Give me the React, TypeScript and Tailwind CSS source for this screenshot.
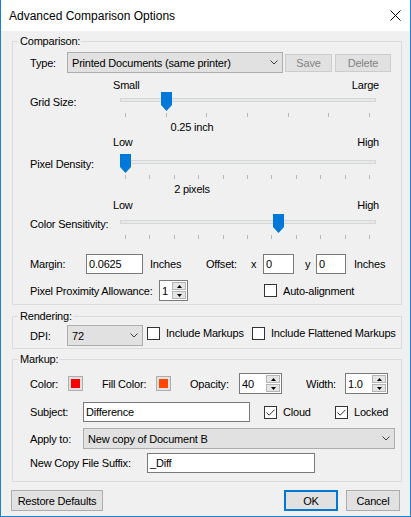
import React from 'react';

const Chevron = () => (
    <svg width="8" height="5" viewBox="0 0 8 5">
        <path d="M0.5 0.5L4 4L7.5 0.5" fill="none" stroke="#3c3c3c" strokeWidth="1" />
    </svg>
);

function Select({ text, className }: { text: string; className: string }) {
    return (
        <div className={`flex items-center justify-between bg-[#e1e1e1] border border-[#adadad] pl-[4px] pr-[4px] ${className}`}>
            <span>{text}</span>
            <Chevron />
        </div>
    );
}

function Checkbox({ checked }: { checked?: boolean }) {
    return (
        <div className="w-[13px] h-[13px] shrink-0 bg-white border border-[#333333] flex items-center justify-center">
            {checked && (
                <svg width="9" height="7" viewBox="0 0 9 7">
                    <path d="M0.5 3.5L3.2 6.2L8.5 0.7" fill="none" stroke="#333333" strokeWidth="1" />
                </svg>
            )}
        </div>
    );
}

function Spinner({ value, className }: { value: string; className: string }) {
    return (
        <div className={`flex bg-white border border-[#7a7a7a] h-[21px] ${className}`}>
            <span className="flex-1 pl-[2px] self-center">{value}</span>
            <div className="w-[15px] flex flex-col gap-[1px] py-[1px] pr-[1px]">
                <div className="flex-1 bg-[#e5e5e5] border border-[#b4b4b4] flex items-center justify-center">
                    <svg width="5" height="3" viewBox="0 0 5 3"><path d="M2.5 0L5 3H0Z" fill="#000" /></svg>
                </div>
                <div className="flex-1 bg-[#e5e5e5] border border-[#b4b4b4] flex items-center justify-center">
                    <svg width="5" height="3" viewBox="0 0 5 3"><path d="M0 0H5L2.5 3Z" fill="#000" /></svg>
                </div>
            </div>
        </div>
    );
}

function Swatch({ color }: { color: string }) {
    return (
        <div className="w-[15px] h-[15px] bg-[#e1e1e1] border border-[#adadad] p-[2px]">
            <div className={`w-full h-full ${color}`} />
        </div>
    );
}

const Thumb = ({ className }: { className: string }) => (
    <svg width="11" height="19" viewBox="0 0 11 19" className={className}>
        <path d="M0 0H11V13L5.5 19L0 13Z" fill="#0078d7" />
    </svg>
);

interface SliderProps {
    label: string;
    lo: string;
    hi: string;
    ticks: number;
    thumbLeft: string;
    topClass: string;
    rowClass: string;
    value?: string;
}

function Slider({ label, lo, hi, ticks, thumbLeft, topClass, rowClass, value }: SliderProps) {
    return (
        <div className={`pl-[17px] ${topClass}`}>
            <div className="ml-[83px] w-[266px] flex justify-between">
                <span>{lo}</span>
                <span>{hi}</span>
            </div>
            <div className={`flex items-center ${rowClass}`}>
                <span className="w-[90px]">{label}</span>
                <div className="relative w-[256px] h-[19px]">
                    <div className="mt-[6px] h-[4px] bg-[#e7eaea] border border-[#d6d6d6]" />
                    <Thumb className={`absolute top-0 ${thumbLeft}`} />
                </div>
            </div>
            <div className="ml-[95px] mt-[2px] w-[245px] flex justify-between">
                {Array.from({ length: ticks }).map((_, i) => (
                    <div key={i} className="w-[1px] h-[4px] bg-[#b8b8b8]" />
                ))}
            </div>
            {value && <div className="ml-[122px] mt-[3px] w-[80px] text-center">{value}</div>}
        </div>
    );
}

export default function App() {
    return (
        <div className="w-[411px] h-[517px] flex flex-col border-x border-b border-[#1883d7] bg-[#f0f0f0] text-black text-[11px] leading-[14px] tracking-[-0.2px] font-['Liberation_Sans',Arial,sans-serif]">
            {/* title bar */}
            <div className="h-[31px] shrink-0 bg-white flex items-center justify-between pl-[8px] pr-[9px]">
                <span className="text-[12px] tracking-normal">Advanced Comparison Options</span>
                <svg width="11" height="11" viewBox="0 0 11 11">
                    <path d="M0.5 0.5L10.5 10.5M10.5 0.5L0.5 10.5" stroke="#000" strokeWidth="1" />
                </svg>
            </div>

            {/* Comparison */}
            <fieldset className="mt-[3px] ml-[11px] w-[390px] border border-[#dcdcdc] pb-[3px]">
                <legend className="ml-[5px] pl-[2px] pr-[1px]">Comparison:</legend>
                <div className="mt-[4px] pl-[17px] flex items-center">
                    <span className="w-[37px]">Type:</span>
                    <Select text="Printed Documents (same printer)" className="w-[216px] h-[21px]" />
                    <button className="ml-[2px] w-[47px] h-[18px] bg-[#e1e1e1] border border-[#cccccc] text-[#838383]">Save</button>
                    <button className="ml-[3px] w-[56px] h-[18px] bg-[#e1e1e1] border border-[#cccccc] text-[#838383]">Delete</button>
                </div>

                <Slider label="Grid Size:" lo="Small" hi="Large" ticks={7} thumbLeft="left-[41px]" topClass="mt-[5px]" rowClass="mt-0" value="0.25 inch" />
                <Slider label="Pixel Density:" lo="Low" hi="High" ticks={11} thumbLeft="left-0" topClass="mt-[1px]" rowClass="mt-[5px]" value="2 pixels" />
                <Slider label="Color Sensitivity:" lo="Low" hi="High" ticks={11} thumbLeft="left-[153px]" topClass="mt-[2px]" rowClass="mt-[2px]" />

                <div className="mt-[15px] pl-[17px] flex items-center">
                    <span className="w-[56px]">Margin:</span>
                    <div className="w-[57px] h-[20px] bg-white border border-[#7a7a7a] pl-[2px] flex items-center">0.0625</div>
                    <span className="ml-[7px] w-[56px]">Inches</span>
                    <span className="w-[45px]">Offset:</span>
                    <span className="w-[12px]">x</span>
                    <div className="w-[31px] h-[20px] bg-white border border-[#7a7a7a] pl-[2px] flex items-center">0</div>
                    <span className="ml-[11px] w-[11px]">y</span>
                    <div className="w-[30px] h-[20px] bg-white border border-[#7a7a7a] pl-[2px] flex items-center">0</div>
                    <span className="ml-[8px]">Inches</span>
                </div>

                <div className="mt-[6px] pl-[17px] flex items-center">
                    <span className="w-[129px]">Pixel Proximity Allowance:</span>
                    <Spinner value="1" className="w-[29px] h-[20px]" />
                    <div className="ml-[76px]"><Checkbox /></div>
                    <span className="ml-[6px]">Auto-alignment</span>
                </div>
            </fieldset>

            {/* Rendering */}
            <fieldset className="mt-[4px] ml-[11px] w-[390px] border border-[#dcdcdc] pb-[2px]">
                <legend className="ml-[5px] pl-[2px] pr-[1px]">Rendering:</legend>
                <div className="mt-[2px] pl-[17px] flex items-start">
                    <span className="mt-[4px] w-[37px]">DPI:</span>
                    <Select text="72" className="w-[76px] h-[21px]" />
                    <div className="ml-[4px] mt-[1px] flex items-center">
                        <Checkbox />
                        <span className="ml-[6px] w-[86px]">Include Markups</span>
                        <Checkbox />
                        <span className="ml-[6px]">Include Flattened Markups</span>
                    </div>
                </div>
            </fieldset>

            {/* Markup */}
            <fieldset className="mt-[3px] ml-[11px] w-[390px] border border-[#dcdcdc] pb-[8px]">
                <legend className="ml-[5px] pl-[2px] pr-[1px]">Markup:</legend>
                <div className="mt-[7px] pl-[17px] flex items-center h-[21px]">
                    <span className="w-[38px]">Color:</span>
                    <Swatch color="bg-[#ff0000]" />
                    <span className="ml-[19px] w-[54px]">Fill Color:</span>
                    <Swatch color="bg-[#ff4500]" />
                    <span className="ml-[19px] w-[49px]">Opacity:</span>
                    <Spinner value="40" className="w-[43px]" />
                    <span className="ml-[24px] w-[39px]">Width:</span>
                    <Spinner value="1.0" className="w-[43px]" />
                </div>

                <div className="mt-[8px] pl-[17px] flex items-center">
                    <span className="w-[53px]">Subject:</span>
                    <div className="w-[167px] h-[20px] bg-white border border-[#7a7a7a] pl-[2px] flex items-center">Difference</div>
                    <div className="ml-[14px]"><Checkbox checked /></div>
                    <span className="ml-[6px] w-[52px]">Cloud</span>
                    <Checkbox checked />
                    <span className="ml-[6px]">Locked</span>
                </div>

                <div className="mt-[6px] pl-[17px] flex items-center">
                    <span className="w-[53px]">Apply to:</span>
                    <Select text="New copy of Document B" className="w-[312px] h-[21px]" />
                </div>

                <div className="mt-[4px] pl-[17px] flex items-center">
                    <span className="w-[117px]">New Copy File Suffix:</span>
                    <div className="w-[168px] h-[20px] bg-white border border-[#7a7a7a] pl-[2px] flex items-center">_Diff</div>
                </div>
            </fieldset>

            {/* buttons */}
            <div className="mt-[8px] px-[10px] flex items-center">
                <button className="w-[92px] h-[21px] bg-[#e1e1e1] border border-[#adadad]">Restore Defaults</button>
                <button className="ml-auto w-[54px] h-[21px] bg-[#e1e1e1] border-2 border-[#0078d7]">OK</button>
                <button className="ml-[8px] w-[54px] h-[21px] bg-[#e1e1e1] border border-[#adadad]">Cancel</button>
            </div>
        </div>
    );
}
